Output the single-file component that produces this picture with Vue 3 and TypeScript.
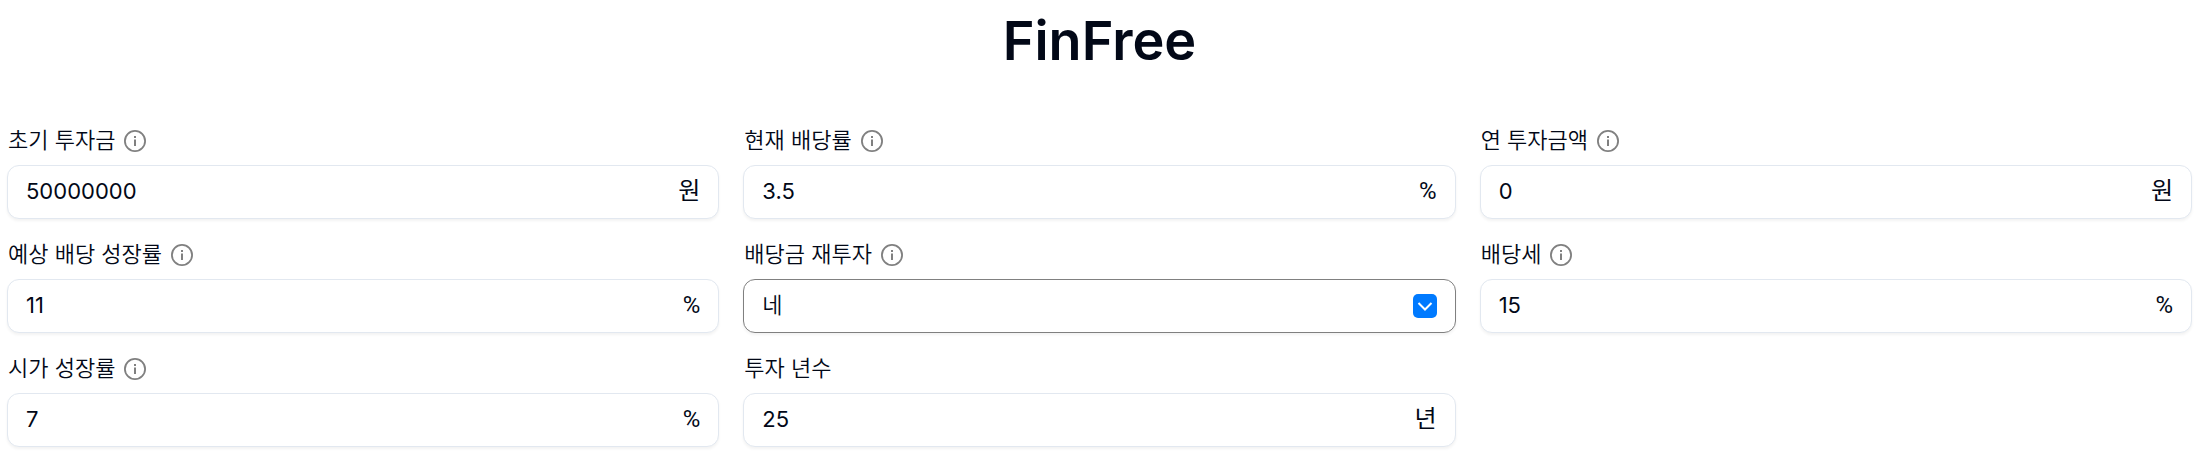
<script setup lang="ts">
import { reactive } from 'vue'

interface Field {
  id: string
  label: string
  value: string
  unit?: string
  options?: string[]
  info: boolean
}

const fields = reactive<Field[]>([
  { id: 'principal', label: '초기 투자금', value: '50000000', unit: '원', info: true },
  { id: 'yield', label: '현재 배당률', value: '3.5', unit: '%', info: true },
  { id: 'annual', label: '연 투자금액', value: '0', unit: '원', info: true },
  { id: 'dividend-growth', label: '예상 배당 성장률', value: '11', unit: '%', info: true },
  { id: 'reinvest', label: '배당금 재투자', value: '네', options: ['네', '아니오'], info: true },
  { id: 'tax', label: '배당세', value: '15', unit: '%', info: true },
  { id: 'price-growth', label: '시가 성장률', value: '7', unit: '%', info: true },
  { id: 'years', label: '투자 년수', value: '25', unit: '년', info: false },
])
</script>

<template>
  <main class="page">
    <h1 class="title">FinFree</h1>
    <form class="grid" @submit.prevent>
      <div v-for="f in fields" :key="f.id" class="field">
        <div class="caption">
          <label :for="f.id">{{ f.label }}</label>
          <svg v-if="f.info" class="info" viewBox="0 0 22 22" aria-hidden="true">
            <circle cx="11" cy="11" r="10.1" fill="none" stroke="currentColor" stroke-width="1.8" />
            <path d="M10 6h2v2h-2zM10 9.6h2v6.4h-2z" fill="currentColor" />
          </svg>
        </div>
        <div v-if="f.options" class="box box-select">
          <select :id="f.id" v-model="f.value" class="control">
            <option v-for="o in f.options" :key="o">{{ o }}</option>
          </select>
          <svg class="chevron" viewBox="0 0 24 24" aria-hidden="true">
            <rect width="24" height="24" rx="5" fill="#007aff" />
            <path d="M5.5 9l6.5 6.5L18.5 9" fill="none" stroke="#fff" stroke-width="2" />
          </svg>
        </div>
        <div v-else class="box">
          <input :id="f.id" v-model="f.value" class="control" type="text" inputmode="decimal" />
          <span class="unit">{{ f.unit }}</span>
        </div>
      </div>
    </form>
  </main>
</template>

<style>
body {
  margin: 0;
  background: #fff;
}
</style>

<style scoped>
.page {
  padding: 7px 13px 12px 7px;
  color: #020817;
  font-family: Inter, "Noto Sans CJK KR", sans-serif;
}
.title {
  margin: 0 0 47px;
  font-size: 54px;
  font-weight: 600;
  line-height: 68px;
  text-align: center;
}
.grid {
  display: grid;
  grid-template-columns: repeat(3, minmax(0, 1fr));
  column-gap: 24px;
  row-gap: 17px;
}
.caption {
  display: flex;
  align-items: center;
  gap: 9px;
  height: 35px;
  margin-bottom: 8px;
  padding-left: 1px;
  font-size: 22px;
  font-weight: 350;
  line-height: 32px;
}
.info {
  width: 22px;
  height: 22px;
  margin-top: 2px;
  color: #808080;
}
.box {
  position: relative;
  display: flex;
  align-items: center;
  box-sizing: border-box;
  height: 54px;
  border: 1px solid #e2e8f0;
  border-radius: 12px;
  background: #fff;
  box-shadow: 0 2px 3px rgba(0, 0, 0, 0.05);
}
.box-select {
  border-color: #808080;
}
.control {
  flex: 1;
  min-width: 0;
  height: 100%;
  margin: 0;
  padding: 0 18px 2px;
  border: 0;
  border-radius: 12px;
  outline: 0;
  appearance: none;
  background: transparent;
  color: inherit;
  font-family: inherit;
  font-size: 22px;
}
select.control {
  font-weight: 350;
}
.chevron {
  position: absolute;
  right: 18px;
  width: 24px;
  height: 24px;
  pointer-events: none;
}
.unit {
  padding: 0 18px 2px 0;
  font-family: Roboto, "Noto Sans CJK KR", sans-serif;
  font-size: 24px;
  font-weight: 400;
  line-height: 32px;
}
</style>
